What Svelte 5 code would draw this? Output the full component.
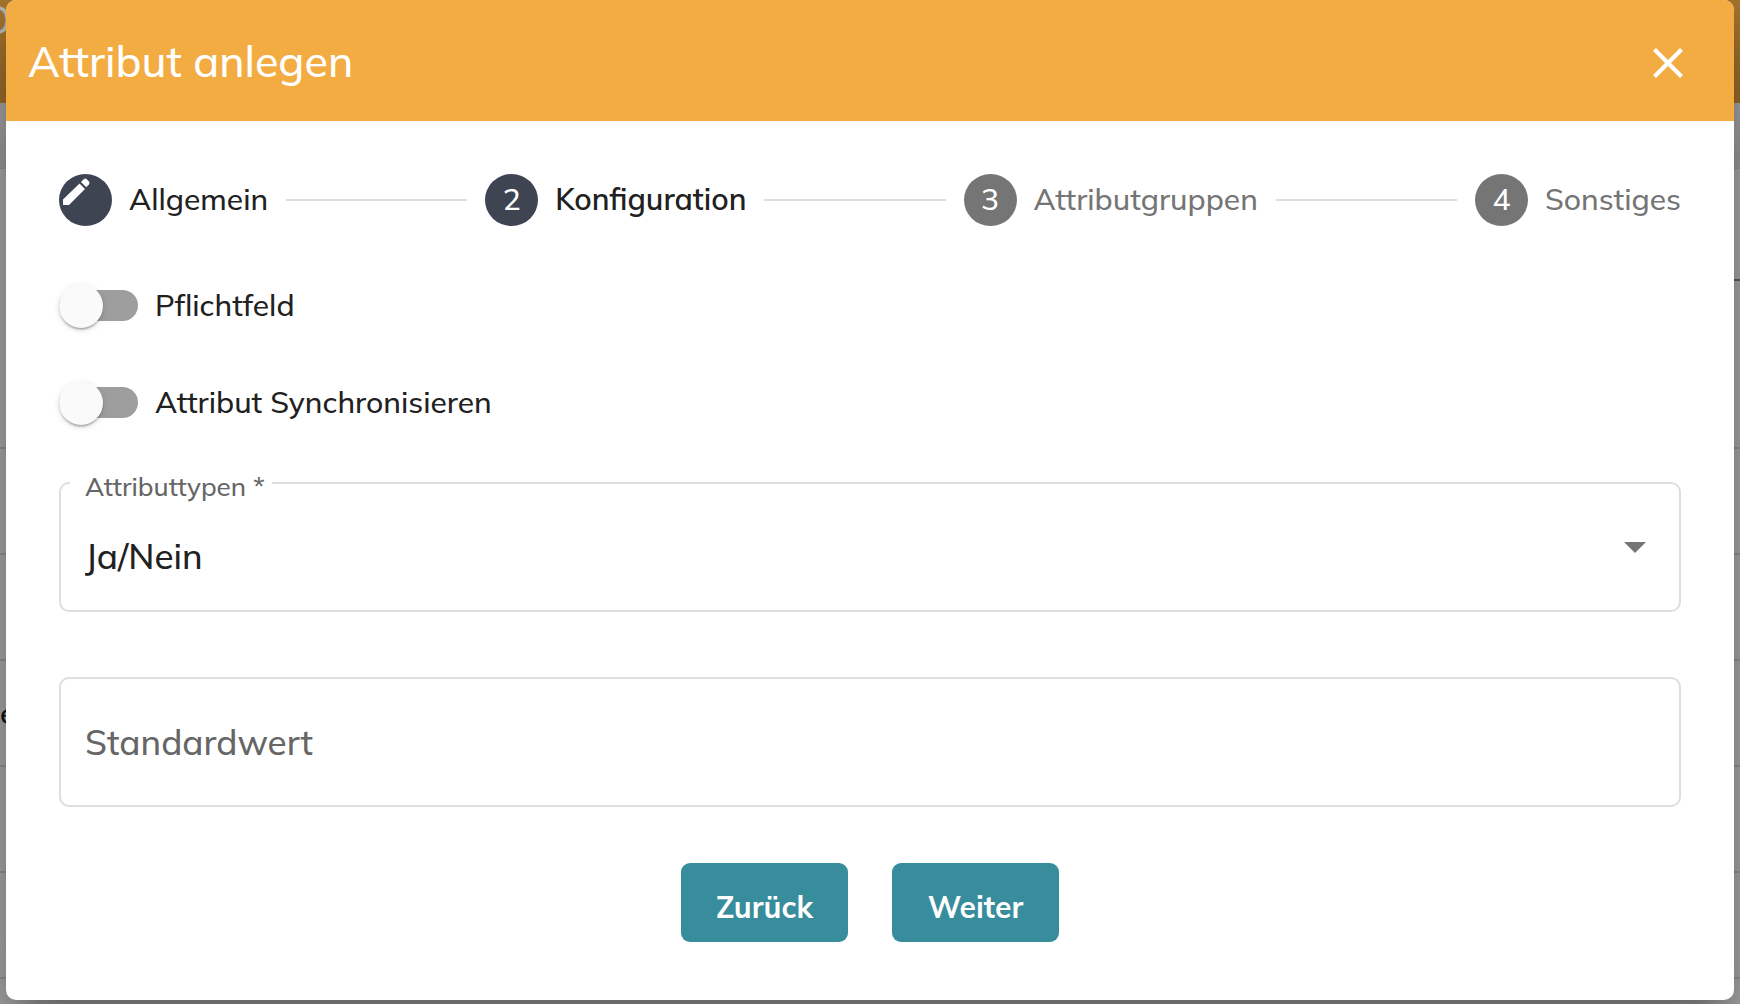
<script lang="ts">
    const steps = [
        { label: "Allgemein", state: "done" },
        { label: "Konfiguration", state: "active" },
        { label: "Attributgruppen", state: "todo" },
        { label: "Sonstiges", state: "todo" },
    ];

    const types = ["Ja/Nein", "Text", "Zahl", "Datum"];

    let open = $state(true);
    let required = $state(false);
    let sync = $state(false);
    let type = $state("Ja/Nein");
    let defaultValue = $state("");
</script>

<div class="page">
    <div class="page-behind" aria-hidden="true">
        <div class="topbar">O</div>
        <div class="toolbar"></div>
        <div class="table-head"></div>
        <div class="row first"></div>
        <div class="row"></div>
        <div class="row"></div>
        <div class="row">e</div>
        <div class="row"></div>
        <div class="row"></div>
        <div class="row"></div>
    </div>

    {#if open}
        <div class="modal" role="dialog" aria-modal="true" aria-labelledby="dialog-title">
            <header>
                <h1 id="dialog-title">Attribut anlegen</h1>
                <button class="close" aria-label="Schließen" onclick={() => (open = false)}>
                    <svg viewBox="0 0 30 30" width="30" height="30">
                        <path d="M1.5 1.5L28.5 28.5M28.5 1.5L1.5 28.5" stroke="#fff" stroke-width="4.2" />
                    </svg>
                </button>
            </header>

            <form onsubmit={(e) => e.preventDefault()}>
                <ol class="stepper">
                    {#each steps as step, i}
                        {#if i > 0}
                            <li class="line" role="presentation"></li>
                        {/if}
                        <li class="step {step.state}" aria-current={step.state === "active" ? "step" : undefined}>
                            <span class="circle">
                                {#if step.state === "done"}
                                    <svg viewBox="0 0 53 53" width="53" height="53" fill="#fff">
                                        <path d="M4 25.5L20.5 9.5L26 15L10 31H4z" />
                                        <path d="M22 8L25 5Q26.200 4 27.500 5L30 7.500Q31 9 30 10.200L27.300 13.200z" />
                                    </svg>
                                {:else}
                                    <span class="caption">{i + 1}</span>
                                {/if}
                            </span>
                            <span class="caption">{step.label}</span>
                        </li>
                    {/each}
                </ol>

                <label class="toggle">
                    <input type="checkbox" role="switch" bind:checked={required} />
                    <span class="caption">Pflichtfeld</span>
                </label>
                <label class="toggle">
                    <input type="checkbox" role="switch" bind:checked={sync} />
                    <span class="caption">Attribut Synchronisieren</span>
                </label>

                <div class="field">
                    <label for="type">Attributtypen *</label>
                    <select id="type" required bind:value={type}>
                        {#each types as t}
                            <option>{t}</option>
                        {/each}
                    </select>
                    <svg class="arrow" viewBox="0 0 22 11" width="22" height="11">
                        <path d="M0 0H22L11 11z" fill="#757575" />
                    </svg>
                </div>

                <div class="field">
                    <input type="text" aria-label="Standardwert" placeholder="Standardwert" bind:value={defaultValue} />
                </div>

                <div class="actions">
                    <button type="button">Zurück</button>
                    <button type="submit">Weiter</button>
                </div>
            </form>
        </div>
    {/if}
</div>

<style>
    :global(body) {
        margin: 0;
        background: #a8a8a8;
    }

    .page {
        position: relative;
        min-height: 100vh;
        overflow: hidden;
        box-sizing: border-box;
        padding: 0 6px 4px;
        font-family: Mulish, Muli, Lato, sans-serif;
        font-size: 30px;
        font-weight: 500;
        color: #212121;
    }

    .page-behind {
        position: absolute;
        inset: 0;
        overflow: hidden;
        background: #a8a8a8;
        line-height: 40px;
    }
    .topbar {
        height: 103px;
        box-sizing: border-box;
        background: linear-gradient(#a8762e, #9c6c2a);
        color: #b8b8b8;
        font-size: 38px;
        text-indent: -18px;
    }
    .toolbar {
        height: 65px;
        border-bottom: 1px solid #949494;
        background: linear-gradient(#a6a6a6, #9a9a9a);
    }
    .table-head {
        height: 110px;
        margin-left: 50%;
        border-bottom: 2px solid #606060;
    }
    .row {
        display: flex;
        align-items: center;
        height: 104px;
        border-bottom: 2px solid #929292;
        color: #111;
    }
    .row.first {
        height: 166px;
    }

    .modal {
        position: relative;
        min-height: calc(100vh - 4px);
        overflow: hidden;
        border-radius: 10px;
        background: #fff;
        box-shadow:
            0 22px 30px -14px rgba(0, 0, 0, 0.3),
            0 48px 76px 6px rgba(0, 0, 0, 0.14),
            0 18px 92px 16px rgba(0, 0, 0, 0.12);
    }

    header {
        display: flex;
        align-items: center;
        justify-content: space-between;
        height: 121px;
        padding: 0 51px 0 22px;
        background: #f3ac42;
        color: #fff;
    }
    h1 {
        margin: 0;
        font-size: 43px;
        font-weight: 500;
    }
    .close {
        display: flex;
        padding: 4px 0 0;
        border: 0;
        background: none;
        cursor: pointer;
    }

    form {
        padding: 53px 53px 58px;
    }

    .stepper {
        display: flex;
        align-items: center;
        gap: 18px;
        margin: 0 0 53px;
        padding: 0;
        list-style: none;
    }
    .step {
        display: flex;
        align-items: center;
        gap: 17px;
    }
    .step.active {
        font-weight: 600;
    }
    .step.todo {
        color: #757575;
    }
    .caption {
        padding-bottom: 2px;
    }
    .circle {
        display: flex;
        align-items: center;
        justify-content: center;
        width: 53px;
        height: 52px;
        border-radius: 50%;
        background: #3f4453;
        color: #fff;
        font-weight: 500;
    }
    .todo .circle {
        background: #757575;
    }
    .line {
        flex: 1;
        height: 2px;
        background: #dedede;
    }

    .toggle {
        display: flex;
        align-items: center;
        gap: 17px;
        width: fit-content;
        height: 53px;
        margin-bottom: 44px;
        cursor: pointer;
    }
    .toggle input {
        position: relative;
        appearance: none;
        width: 79px;
        height: 31px;
        margin: 0;
        border-radius: 16px;
        background: #9e9e9e;
        cursor: pointer;
    }
    .toggle input::before {
        content: "";
        position: absolute;
        top: -6px;
        left: 0;
        width: 44px;
        height: 44px;
        border-radius: 50%;
        background: #fafafa;
        box-shadow:
            0 3px 2px -2px rgba(0, 0, 0, 0.2),
            0 2px 2px rgba(0, 0, 0, 0.14),
            0 2px 6px rgba(0, 0, 0, 0.12);
        transition: left 0.1s;
    }
    .toggle input:checked::before {
        left: 35px;
    }

    .field {
        position: relative;
        margin: 53px 0 65px;
    }
    .field label {
        position: absolute;
        top: -13px;
        left: 11px;
        padding: 0 7px 0 15px;
        background: #fff;
        color: #666;
        font-size: 26px;
        line-height: 36px;
    }
    .field select,
    .field input {
        display: block;
        appearance: none;
        box-sizing: border-box;
        width: 100%;
        height: 130px;
        margin: 0;
        padding: 0 24px;
        border: 2px solid #dedede;
        border-radius: 10px;
        background: transparent;
        color: #212121;
        font: inherit;
        font-size: 35px;
    }
    .field select {
        padding-top: 18px;
    }
    .field ::placeholder {
        color: #666;
        opacity: 1;
    }
    .arrow {
        position: absolute;
        top: 60px;
        right: 35px;
        pointer-events: none;
    }

    .actions {
        display: flex;
        justify-content: center;
        gap: 44px;
        margin-top: -9px;
    }
    .actions button {
        min-width: 167px;
        height: 79px;
        padding: 8px 32px 0;
        border: 0;
        border-radius: 9px;
        background: #378d9b;
        color: #fff;
        font: inherit;
        font-weight: 700;
        cursor: pointer;
    }
</style>
